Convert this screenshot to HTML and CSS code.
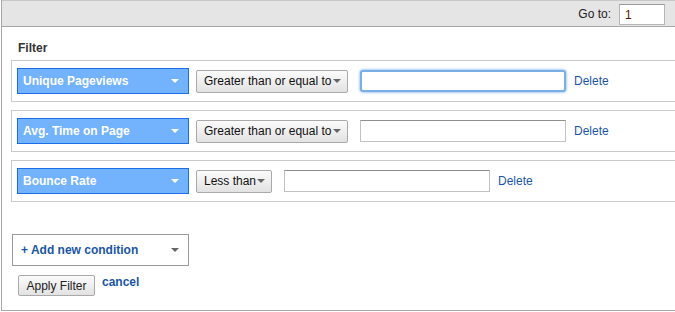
FILE: index.html
```html
<!DOCTYPE html>
<html lang="en">
<head>
    <meta charset="UTF-8">
    <title>Filter</title>
    <link rel="stylesheet" href="styles.css">
</head>
<body>
    <div class="panel">
        <div class="toolbar">
            <label for="goto">Go to:</label>
            <input type="text" id="goto" class="goto-input" value="1">
        </div>
        <div class="filter-body">
            <h2>Filter</h2>

            <div class="condition">
                <div class="metric">Unique Pageviews<span class="arrow white"></span></div>
                <button class="op-btn wide">Greater than or equal to<span class="arrow grey"></span></button>
                <input type="text" class="value-input focused">
                <a href="#" class="delete">Delete</a>
            </div>

            <div class="condition">
                <div class="metric">Avg. Time on Page<span class="arrow white"></span></div>
                <button class="op-btn wide">Greater than or equal to<span class="arrow grey"></span></button>
                <input type="text" class="value-input">
                <a href="#" class="delete">Delete</a>
            </div>

            <div class="condition">
                <div class="metric">Bounce Rate<span class="arrow white"></span></div>
                <button class="op-btn">Less than<span class="arrow grey"></span></button>
                <input type="text" class="value-input">
                <a href="#" class="delete">Delete</a>
            </div>

            <div class="add-condition">+ Add new condition<span class="arrow grey"></span></div>

            <div class="actions">
                <button class="apply-btn">Apply Filter</button>
                <a href="#" class="cancel">cancel</a>
            </div>
        </div>
    </div>
</body>
</html>
```

FILE: styles.css
```css
* {
    margin: 0;
    padding: 0;
    box-sizing: border-box;
}
body {
    font-family: 'Liberation Sans', Arial, sans-serif;
    font-size: 12px;
    color: #222;
    background: #fff;
}
.panel {
    height: 311px;
    border-left: 1px solid #a8a8a8;
    border-bottom: 1px solid #a8a8a8;
    margin-left: 1px;
}
.toolbar {
    height: 27px;
    background-color: #e5e5e5;
    border-top: 1px solid #c8c8c8;
    border-bottom: 1px solid #a8a8a8;
    display: flex;
    justify-content: flex-end;
    align-items: center;
    padding-right: 10px;
}
.toolbar label {
    font-size: 12px;
    color: #222;
    margin-right: 8px;
}
.goto-input {
    width: 46px;
    height: 21px;
    border: 1px solid #b5b5b5;
    border-top-color: #999;
    padding: 2px 5px 0;
    font-family: inherit;
    font-size: 12px;
    color: #5a1800;
    margin-top: 1px;
}
.filter-body {
    padding: 14px 0 0 9px;
}
h2 {
    font-size: 12px;
    font-weight: bold;
    color: #333;
    margin-left: 7px;
    margin-bottom: 5px;
}
.condition {
    height: 42px;
    border: 1px solid #cacaca;
    border-right: none;
    display: flex;
    align-items: center;
    padding-left: 5px;
    margin-bottom: 8px;
}
.metric {
    width: 172px;
    height: 26px;
    background-color: #73b2fd;
    border: 1px solid #1c6ee8;
    color: #fff;
    font-weight: bold;
    font-size: 12px;
    display: flex;
    align-items: center;
    justify-content: space-between;
    padding: 0 9px 0 5px;
    margin-right: 7px;
}
.arrow {
    width: 0;
    height: 0;
    border-left: 4px solid transparent;
    border-right: 4px solid transparent;
    border-top: 4px solid #fff;
}
.arrow.grey {
    border-top-color: #666;
}
.op-btn {
    height: 23px;
    padding: 0 6px 0 7px;
    border: 1px solid #a9a9a9;
    border-radius: 2px;
    background: linear-gradient(#fbfbfb, #e2e2e2);
    font-family: inherit;
    font-size: 12px;
    color: #111;
    display: flex;
    align-items: center;
    justify-content: space-between;
    white-space: nowrap;
    width: 76px;
    margin-right: 12px;
}
.op-btn.wide {
    width: 152px;
}
.value-input {
    width: 206px;
    height: 22px;
    border: 1px solid #c2c2c2;
    border-top-color: #8f8f8f;
    margin-right: 8px;
    font-family: inherit;
}
.value-input.focused {
    border: 2px solid #7aaee6;
    border-radius: 3px;
    box-shadow: 0 0 3px #5c9ce0;
    outline: none;
}
.delete {
    color: #1a56a5;
    text-decoration: none;
    font-size: 12px;
}
.add-condition {
    width: 177px;
    height: 32px;
    border: 1px solid #9a9a9a;
    margin-top: 32px;
    margin-left: 1px;
    display: flex;
    align-items: center;
    justify-content: space-between;
    padding: 0 9px 0 8px;
    color: #1a56a5;
    font-weight: bold;
    font-size: 12px;
}
.actions {
    display: flex;
    align-items: flex-start;
    margin-top: 9px;
    margin-left: 7px;
}
.apply-btn {
    width: 77px;
    height: 21px;
    border: 1px solid #a9a9a9;
    border-radius: 2px;
    background: linear-gradient(#fbfbfb, #e2e2e2);
    font-family: inherit;
    font-size: 12px;
    color: #222;
    margin-right: 7px;
}
.cancel {
    color: #1a56a5;
    font-weight: bold;
    text-decoration: none;
    font-size: 12px;
}
```
